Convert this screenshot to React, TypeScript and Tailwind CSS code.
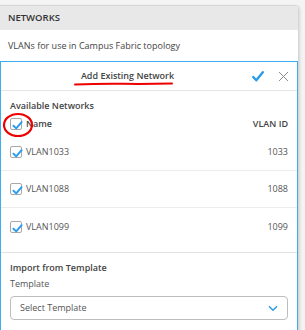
import React from "react";

const Check = () => (
  <span className="relative flex h-[12px] w-[12px] shrink-0 items-center justify-center rounded-[2px] border border-[#a8a8a8] bg-white">
    <svg width="11" height="11" viewBox="0 0 11 11" className="absolute left-[1px] top-[1px]">
      <path d="M1.5 5.8 L4.2 8.4 L9.6 2.2" fill="none" stroke="#2a9df4" strokeWidth="2" strokeLinecap="round" strokeLinejoin="round" />
    </svg>
  </span>
);

const rows = [
  { name: "VLAN1033", id: "1033" },
  { name: "VLAN1088", id: "1088" },
  { name: "VLAN1099", id: "1099" },
];

export default function App() {
  return (
    <div className="relative h-[330px] w-[305px] overflow-hidden bg-[#f4f4f4] pt-[5px] font-['Open_Sans','Noto_Sans',sans-serif]">
      <div className="-ml-px h-[330px] w-[300px] rounded-tr-[4px] border border-[#d6d6d6] bg-white shadow-[1px_1px_3px_rgba(0,0,0,0.12)]">
        <div className="flex h-[24px] items-center rounded-tr-[4px] bg-[#e8e8e9] px-[8px] text-[9.5px] font-semibold text-[#333]">
          NETWORKS
        </div>
        <div className="flex h-[31px] items-center px-[8px] text-[9px] text-[#444]">
          VLANs for use in Campus Fabric topology
        </div>
        <div className="h-[300px] border border-[#3aaef0] bg-white">
          <div className="flex h-[29px] items-center border-b border-[#e6e6e6]">
            <div className="flex-1 pl-[2px] text-center text-[9px] font-semibold text-[#444]">
              Add Existing Network
            </div>
            <svg width="12" height="11" viewBox="0 0 12 11" className="mr-[14px]">
              <path d="M1.2 6 L4.3 9.3 L10.8 1.3" fill="none" stroke="#2b9ce6" strokeWidth="2.4" strokeLinecap="round" strokeLinejoin="round" />
            </svg>
            <svg width="11" height="11" viewBox="0 0 11 11" className="mr-[8px]">
              <path d="M1 1 L10 10 M10 1 L1 10" fill="none" stroke="#8a8a8a" strokeWidth="1" />
            </svg>
          </div>
          <div className="px-[9px] pt-[7px] text-[9px] font-semibold leading-[16px] text-[#444]">
            Available Networks
          </div>
          <div className="flex h-[20px] items-center px-[9px] text-[9px] font-semibold text-[#444]">
            <Check />
            <span className="ml-[4px] flex-1">Name</span>
            <span>VLAN ID</span>
          </div>
          {rows.map((r, i) => (
            <div
              key={r.id}
              className={
                "flex h-[37px] items-center px-[9px] text-[9px] text-[#555] " +
                (i < 2 ? "border-b border-[#ececec]" : "")
              }
            >
              <Check />
              <span className="ml-[4px] flex-1">{r.name}</span>
              <span>{r.id}</span>
            </div>
          ))}
          <div className="h-[8px] border-b border-[#e2e2e2]" />
          <div className="px-[9px] pt-[7px] text-[9px] font-semibold leading-[16px] text-[#444]">
            Import from Template
          </div>
          <div className="px-[9px] text-[9px] leading-[16px] text-[#555]">Template</div>
          <div className="mx-[9px] mt-[4px] flex h-[24px] items-center justify-between rounded-[4px] border border-[#bdbdbd] pl-[9px] pr-[9px] text-[9px] text-[#555]">
            <span>Select Template</span>
            <svg width="10" height="7" viewBox="0 0 10 7">
              <path d="M1 1.2 L5 5.2 L9 1.2" fill="none" stroke="#2b9ce6" strokeWidth="1.5" />
            </svg>
          </div>
        </div>
      </div>
      <svg className="pointer-events-none absolute left-0 top-0" width="305" height="330">
        <path d="M75 84.5 Q100 83.5 123 83.8 T172 83.5" fill="none" stroke="#ee0000" strokeWidth="2" strokeLinecap="round" />
        <ellipse cx="18" cy="125" rx="14" ry="11" fill="none" stroke="#ee0000" strokeWidth="2.2" />
      </svg>
    </div>
  );
}
